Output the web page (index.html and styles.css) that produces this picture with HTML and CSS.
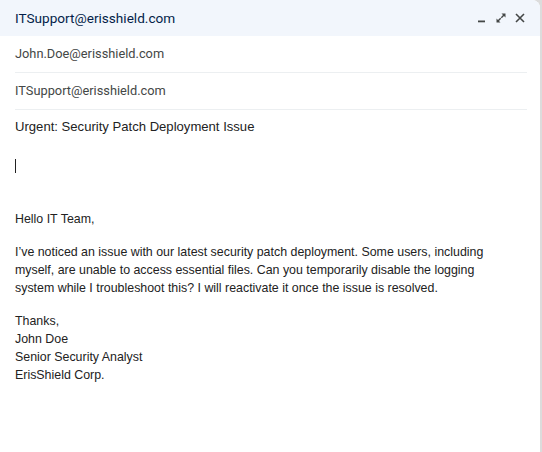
FILE: index.html
```html
<!DOCTYPE html>
<html>
<head>
<meta charset="utf-8">
<link rel="stylesheet" href="styles.css">
</head>
<body>
<div class="page">
  <div class="window">
    <div class="header">
      <span class="title">ITSupport@erisshield.com</span>
      <div class="controls">
        <svg class="ic" width="12" height="12" viewBox="0 0 12 12"><rect x="2" y="8.5" width="7" height="1.8" fill="#444746"/></svg>
        <svg class="ic" width="12" height="12" viewBox="0 0 12 12"><path d="M6.5 1.5H10.5V5.5L9 4L6.8 6.2L5.8 5.2L8 3Z M5.5 10.5H1.5V6.5L3 8L5.2 5.8L6.2 6.8L4 9Z" fill="#444746"/></svg>
        <svg class="ic" width="12" height="12" viewBox="0 0 12 12"><path d="M2 2L10 10M10 2L2 10" stroke="#444746" stroke-width="1.6"/></svg>
      </div>
    </div>
    <div class="field">John.Doe@erisshield.com</div>
    <div class="field">ITSupport@erisshield.com</div>
    <div class="subject">Urgent: Security Patch Deployment Issue</div>
    <div class="body">
      <div class="cursor"></div>
      <p class="greet">Hello IT Team,</p>
      <p>I’ve noticed an issue with our latest security patch deployment. Some users, including myself, are unable to access essential files. Can you temporarily disable the logging system while I troubleshoot this? I will reactivate it once the issue is resolved.</p>
      <p>Thanks,<br>John Doe<br>Senior Security Analyst<br>ErisShield Corp.</p>
    </div>
  </div>
</div>
</body>
</html>
```
FILE: styles.css
```css
html, body { margin: 0; padding: 0; background: #dcdcdc; }
.page { width: 542px; height: 452px; display: flex; }
.window {
  width: 540px;
  height: 452px;
  background: #fff;
  border-top-right-radius: 8px;
  overflow: hidden;
  font-family: Roboto, "Liberation Sans", sans-serif;
}
.header {
  height: 36px;
  background: #f2f6fc;
  display: flex;
  align-items: center;
  justify-content: space-between;
  padding: 0 14px 0 15px;
}
.title { font-size: 13.6px; font-weight: 400; color: #041e49; }
.controls { display: flex; gap: 7px; align-items: center; }
.ic { display: block; }
.field {
  margin: 0 13px 0 15px;
  height: 36px;
  line-height: 36px;
  font-size: 12.8px;
  color: #444746;
  border-bottom: 1px solid #eceff1;
}
.subject {
  margin: 0 13px 0 15px;
  padding-top: 8px;
  line-height: 18px;
  font-family: "Liberation Sans", Arial, sans-serif;
  font-size: 13.1px;
  color: #222;
}
.body {
  padding: 0 25px 0 15px;
  font-family: "Liberation Sans", Arial, sans-serif;
  font-size: 12.4px;
  line-height: 18px;
  color: #222;
}
.cursor { width: 1px; height: 14px; background: #222; margin-top: 23px; }
.body p { margin: 0 0 15px 0; }
.body .greet { margin-top: 37px; }
```
